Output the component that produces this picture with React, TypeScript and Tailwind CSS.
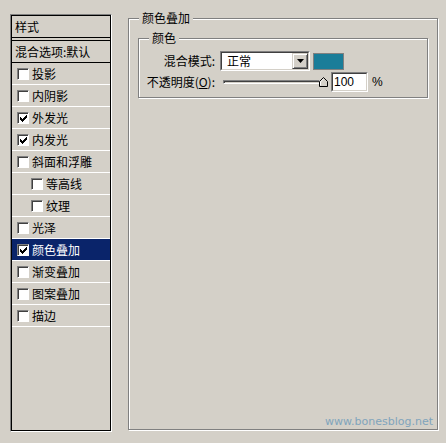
import React from "react";

const CJK = "font-['SimSun','Noto_Sans_CJK_SC',sans-serif]";

const layers: { label: string; checked: boolean; indent?: boolean }[] = [
  { label: "投影", checked: false },
  { label: "内阴影", checked: false },
  { label: "外发光", checked: true },
  { label: "内发光", checked: true },
  { label: "斜面和浮雕", checked: false },
  { label: "等高线", checked: false, indent: true },
  { label: "纹理", checked: false, indent: true },
  { label: "光泽", checked: false },
  { label: "颜色叠加", checked: true },
  { label: "渐变叠加", checked: false },
  { label: "图案叠加", checked: false },
  { label: "描边", checked: false },
];

function CheckBox({ checked }: { checked: boolean }) {
  return (
    <span className="flex h-[12px] w-[12px] shrink-0 border border-t-[#808080] border-l-[#808080] border-r-white border-b-white">
      <span className="flex flex-1 items-center justify-center border-t border-l border-[#404040] bg-white">
        {checked && (
          <svg width="7" height="7" viewBox="0 0 7 7">
            <path d="M0 2h1v1h1v1h1v-1h1v-1h1v-1h1v-1h1v3h-1v1h-1v1h-1v1h-1v1h-1v-1h-1v-1h-1z" fill="#000" />
          </svg>
        )}
      </span>
    </span>
  );
}

function GroupBox({
  title,
  className,
  children,
}: {
  title: string;
  className?: string;
  children?: React.ReactNode;
}) {
  return (
    <div
      className={
        "relative flex flex-col border border-[#808080] shadow-[inset_1px_1px_0_#fff,1px_1px_0_#fff] " +
        (className ?? "")
      }
    >
      <span className="absolute -top-[8px] left-[10px] bg-[#d4d0c8] px-[3px] text-[12px] leading-[14px] text-black">
        {title}
      </span>
      {children}
    </div>
  );
}

export default function App() {
  return (
    <div className={`flex h-[443px] w-[446px] items-start bg-[#d4d0c8] text-[12px] text-black ${CJK}`}>
      {/* left style list */}
      <div className="ml-[10px] mt-[14px] flex h-[418px] w-[102px] border border-t-[#808080] border-l-[#808080] border-r-white border-b-white">
        <div className="flex flex-1 flex-col border border-black">
          <div className="flex h-[22px] shrink-0 items-center border-b border-black pl-[3px] leading-[14px]">样式</div>
          <div className="mt-[2px] flex h-[23px] shrink-0 items-center border-y border-black pl-[3px] leading-[14px]">
            混合选项:默认
          </div>
          {layers.map((l) => {
            const sel = l.label === "颜色叠加";
            return (
              <div
                key={l.label}
                className={
                  "flex h-[22px] shrink-0 items-center gap-[3px] border-b border-white leading-[14px] " +
                  (l.indent ? "pl-[19px] " : "pl-[5px] ") +
                  (sel ? "bg-[#0a246a] text-white" : "")
                }
              >
                <CheckBox checked={l.checked} />
                <span>{l.label}</span>
              </div>
            );
          })}
        </div>
      </div>

      {/* right settings */}
      <GroupBox title="颜色叠加" className="ml-[16px] mt-[18px] h-[412px] w-[310px]">
        <GroupBox title="颜色" className="ml-[9px] mt-[19px] h-[60px] w-[290px]">
          <div className="mt-[12px] flex h-[20px] items-center">
            <span className="w-[77px] pr-[1px] text-right leading-[14px]">混合模式:</span>
            <div className="ml-[4px] flex h-[20px] w-[90px] border border-t-[#808080] border-l-[#808080] border-r-white border-b-white">
              <div className="flex flex-1 items-center border border-t-[#404040] border-l-[#404040] border-r-[#d4d0c8] border-b-[#d4d0c8] bg-white">
                <span className="flex-1 pl-[5px] leading-[14px]">正常</span>
                <span className="flex h-[16px] w-[16px] items-center justify-center border border-t-[#d4d0c8] border-l-[#d4d0c8] border-r-[#404040] border-b-[#404040] bg-[#d4d0c8] shadow-[inset_1px_1px_0_#fff,inset_-1px_-1px_0_#808080]">
                  <svg width="7" height="4" viewBox="0 0 7 4">
                    <path d="M0 0h7L3.5 4z" fill="#000" />
                  </svg>
                </span>
              </div>
            </div>
            <span className="ml-[3px] h-[17px] w-[31px] border border-[#808080] bg-[#1a7d99]" />
          </div>
          <div className="mt-[1px] flex h-[20px] items-center">
            <span className="w-[77px] pr-[1px] text-right leading-[14px]">
              不透明度(<span className="underline">O</span>):
            </span>
            <div className="ml-[7px] flex items-center">
              <div className="h-[4px] w-[97px] border border-t-[#808080] border-l-[#808080] border-r-white border-b-white">
                <div className="h-full border-t border-l border-[#404040] bg-[#d4d0c8]" />
              </div>
              <svg width="9" height="10" viewBox="0 0 9 10" className="-ml-[1px]">
                <path d="M0.5 9.5V4.5L4.5 0.5L8.5 4.5V9.5Z" fill="#d4d0c8" stroke="#000" />
                <path d="M1.5 8.5V4.9L4.5 1.9" fill="none" stroke="#fff" />
              </svg>
            </div>
            <div className="ml-[3px] flex h-[20px] w-[37px] border border-t-[#808080] border-l-[#808080] border-r-white border-b-white">
              <div className="flex flex-1 items-center border border-t-[#404040] border-l-[#404040] border-r-[#d4d0c8] border-b-[#d4d0c8] bg-white pl-[1px] font-['Liberation_Sans',sans-serif] text-[12px] leading-[14px]">
                100
              </div>
            </div>
            <span className="ml-[4px] font-['Liberation_Sans',sans-serif] leading-[14px]">%</span>
          </div>
        </GroupBox>
        <span className="mb-[1px] mr-[4px] mt-auto self-end font-['DejaVu_Sans',sans-serif] text-[11px] leading-[13px] text-[#80a4bc]">
          www.bonesblog.net
        </span>
      </GroupBox>
    </div>
  );
}
